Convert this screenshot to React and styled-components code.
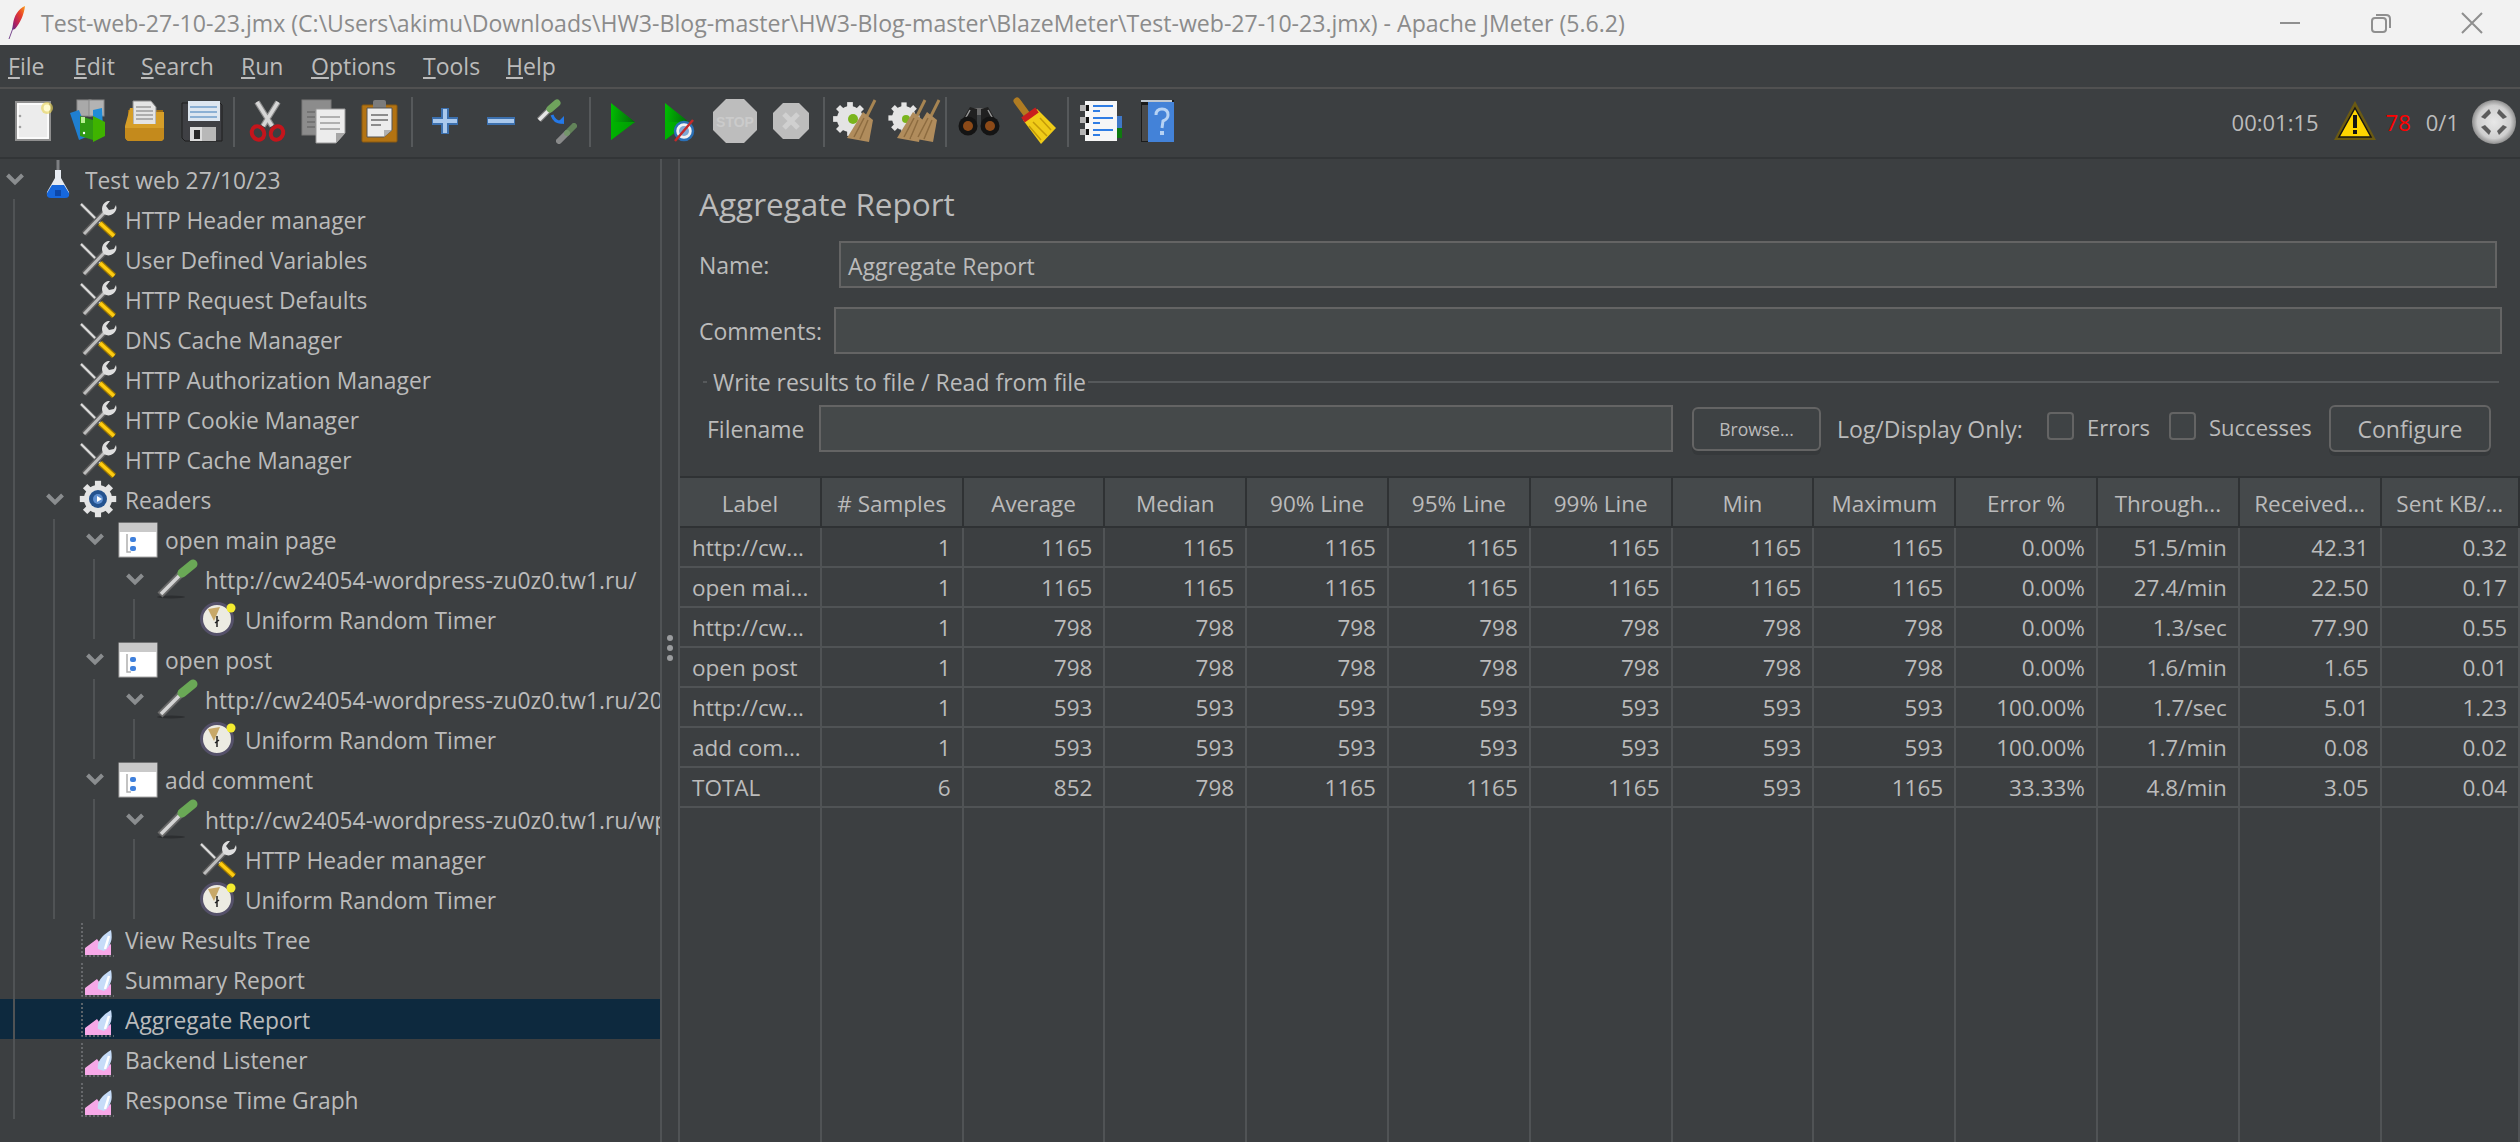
import React from "react";
import styled, { createGlobalStyle } from "styled-components";

const FONT = `"Open Sans", "Noto Sans", sans-serif`;

const GlobalStyle = createGlobalStyle`
  html, body {
    margin: 0;
    padding: 0;
    background: #3c3f41;
  }
  * {
    box-sizing: border-box;
  }
`;

const Page = styled.div`
  width: 2520px;
  height: 1142px;
  display: flex;
  flex-direction: column;
  overflow: hidden;
  background: #3c3f41;
  color: #bbbbbb;
  font-family: ${FONT};
  font-size: 23px;
`;

/* Window title */
const TitleBar = styled.div`
  height: 45px;
  flex: none;
  display: flex;
  align-items: center;
  background: #f2f2f2;
  color: #8b8b8b;
  padding: 0 3px 0 8px;
`;

const TitleText = styled.span`
  margin-left: 15px;
  flex: 1;
  white-space: nowrap;
  font-size: 23.1px;
`;

const WindowButton = styled.span`
  width: 91px;
  height: 45px;
  display: flex;
  align-items: center;
  justify-content: center;
`;

/* Menu */
const MenuBar = styled.div`
  height: 44px;
  flex: none;
  display: flex;
  align-items: center;
  padding-left: 8px;
  border-bottom: 2px solid #515151;
`;

const MenuItem = styled.span`
  width: ${(p) => p.$w}px;
  color: #bbbbbb;
  &::first-letter {
    text-decoration: underline;
  }
`;

/* Toolbar */
const ToolBar = styled.div`
  height: 70px;
  flex: none;
  display: flex;
  align-items: center;
  padding: 0 4px 2px 5px;
  border-bottom: 2px solid #323537;
`;

const ToolButton = styled.span`
  width: 56px;
  height: 44px;
  display: flex;
  align-items: center;
  justify-content: center;
`;

const ToolSep = styled.span`
  width: 2px;
  height: 50px;
  margin: 0 4px;
  background: #56595b;
`;

const StatusArea = styled.div`
  margin-left: auto;
  display: flex;
  align-items: center;
  font-size: 22px;
`;

const StatusText = styled.span`
  margin-left: ${(p) => p.$ml || 0}px;
  color: ${(p) => p.$color || "#bbbbbb"};
`;

const IconSvg = styled.svg`
  flex: none;
  overflow: visible;
  display: block;
`;

/* Split */
const Split = styled.div`
  flex: 1;
  display: flex;
  min-height: 0;
`;

const TreePane = styled.div`
  width: 662px;
  flex: none;
  overflow: hidden;
  font-size: 22.8px;
  border-right: 2px solid #505355;
`;

const Branch = styled.div`
  position: relative;
  &::before {
    content: "";
    position: absolute;
    z-index: 1;
    left: ${(p) => 13 + p.$level * 40}px;
    top: 0;
    bottom: 0;
    width: 2px;
    background: #505355;
  }
`;

const TreeRow = styled.div`
  height: 40px;
  display: flex;
  align-items: center;
  padding-left: ${(p) => p.$level * 40}px;
  white-space: nowrap;
  background: ${(p) => (p.$selected ? "#0d293e" : "transparent")};
`;

const ChevronSlot = styled.span`
  width: 30px;
  flex: none;
  display: flex;
  justify-content: center;
`;

const TreeIcon = styled.span`
  width: 40px;
  height: 40px;
  margin-left: 8px;
  flex: none;
`;

const TreeLabel = styled.span`
  margin-left: 7px;
  padding-top: 2px;
  flex: 1;
  min-width: 0;
  overflow: hidden;
`;

const Divider = styled.div`
  width: 16px;
  flex: none;
  display: flex;
  flex-direction: column;
  align-items: center;
  justify-content: center;
  gap: 4px;
  padding-bottom: 6px;
`;

const Dot = styled.span`
  width: 6px;
  height: 6px;
  border-radius: 50%;
  background: #9a9c9e;
`;

const ReportPane = styled.div`
  flex: 1;
  min-width: 0;
  display: flex;
  flex-direction: column;
  border-left: 2px solid #505355;
`;

const ReportTitle = styled.h1`
  margin: 25px 0 17px 19px;
  height: 40px;
  line-height: 40px;
  font-size: 31.5px;
  font-weight: 400;
`;

const FieldRow = styled.div`
  display: flex;
  align-items: center;
  padding: 0 ${(p) => p.$right}px 0 19px;
  margin-bottom: ${(p) => p.$bottom || 0}px;
`;

const FieldLabel = styled.span`
  width: ${(p) => p.$w}px;
  flex: none;
  white-space: nowrap;
`;

const TextBox = styled.div`
  flex: ${(p) => (p.$w ? "none" : 1)};
  width: ${(p) => (p.$w ? `${p.$w}px` : "auto")};
  height: 47px;
  padding-left: 7px;
  line-height: 46px;
  background: #45494a;
  border: 2px solid #646464;
`;

const GroupTitle = styled.div`
  display: flex;
  align-items: center;
  height: 30px;
  margin: 1px 21px 8px 23px;
  white-space: nowrap;
  &::before {
    content: "";
    width: 4px;
    height: 2px;
    margin-right: 6px;
    background: #56595b;
  }
  &::after {
    content: "";
    flex: 1;
    height: 2px;
    margin-left: 2px;
    background: #56595b;
  }
`;

const FileRow = styled.div`
  display: flex;
  align-items: center;
  height: 47px;
  padding-left: 27px;
`;

const Plain = styled.span`
  width: ${(p) => p.$w}px;
  margin-left: ${(p) => p.$ml || 0}px;
  flex: none;
  white-space: nowrap;
  font-size: ${(p) => p.$size || 23}px;
  position: relative;
  top: ${(p) => p.$up || 0}px;
`;

const Button = styled.button`
  width: ${(p) => p.$w}px;
  height: ${(p) => p.$h}px;
  margin-left: ${(p) => p.$ml}px;
  flex: none;
  padding: 0;
  font-family: ${FONT};
  font-size: ${(p) => p.$size}px;
  color: #bbbbbb;
  background: #3e4244;
  border: 2px solid #646464;
  border-radius: 6px;
  box-shadow: 0 4px 0 #36393b;
`;

const CheckBox = styled.span`
  width: 27px;
  height: 28px;
  margin-left: ${(p) => p.$ml}px;
  flex: none;
  position: relative;
  top: -3px;
  background: #3f4345;
  border: 2px solid #646464;
  border-radius: 4px;
`;

const Table = styled.div`
  flex: 1;
  margin-top: 24px;
  display: grid;
  grid-template-columns: repeat(12, 141.8px) 1fr;
  grid-template-rows: 52px repeat(7, 40px) 1fr;
  font-size: 22.5px;
`;

const HeadCell = styled.div`
  display: flex;
  align-items: center;
  justify-content: center;
  padding-top: 2px;
  background: #45494b;
  border-top: 2px solid #2f3234;
  border-bottom: 2px solid #2f3234;
  border-right: 2px solid #2f3234;
  white-space: nowrap;
  overflow: hidden;
`;

const Cell = styled.div`
  display: flex;
  align-items: center;
  justify-content: ${(p) => (p.$left ? "flex-start" : "flex-end")};
  padding: 0 11px 0 12px;
  border-right: 2px solid #505355;
  border-bottom: 2px solid #505355;
  white-space: nowrap;
  overflow: hidden;
`;

const EmptyCell = styled.div`
  border-right: 2px solid #505355;
`;

/* Drawings */
const Svg = ({ size = 44, children }) => (
  <IconSvg width={size} height={size} viewBox={`0 0 ${size} ${size}`}>
    {children}
  </IconSvg>
);

const Feather = () => (
  <IconSvg width="18" height="33" viewBox="0 0 18 33">
    <defs>
      <linearGradient id="feather" x1="1" y1="0" x2="0" y2="1">
        <stop offset="0" stopColor="#f9a01b" />
        <stop offset="0.35" stopColor="#e8402a" />
        <stop offset="0.7" stopColor="#b5205f" />
        <stop offset="1" stopColor="#5b2a86" />
      </linearGradient>
    </defs>
    <path d="M17 0 C10 3 6 10 5 18 L4 24 L7 23 C12 17 16 9 17 0 Z" fill="url(#feather)" />
    <path d="M5 22 L1 33" stroke="#7a4a90" strokeWidth="1" />
  </IconSvg>
);

const Minimize = () => (
  <IconSvg width="20" height="20" viewBox="0 0 20 20">
    <path d="M0 10 H20" stroke="#8f8f8f" strokeWidth="2" />
  </IconSvg>
);

const Restore = () => (
  <IconSvg width="20" height="20" viewBox="0 0 20 20">
    <rect x="1" y="5" width="14" height="14" rx="3" fill="none" stroke="#8f8f8f" strokeWidth="2" />
    <path d="M5 2 H15 Q19 2 19 6 V15" fill="none" stroke="#8f8f8f" strokeWidth="2" />
  </IconSvg>
);

const CloseX = () => (
  <IconSvg width="20" height="20" viewBox="0 0 20 20">
    <path d="M0 0 L20 20 M20 0 L0 20" stroke="#8f8f8f" strokeWidth="2" />
  </IconSvg>
);

const NewIcon = () => (
  <Svg>
    <rect x="5" y="2" width="34" height="38" fill="#ececec" stroke="#8f8f8f" strokeWidth="2" />
    <rect x="7" y="4" width="30" height="34" fill="none" stroke="#ffffff" strokeWidth="1.5" />
    <circle cx="9" cy="16" r="1.3" fill="#a0a0a0" />
    <circle cx="9" cy="27" r="1.3" fill="#a0a0a0" />
    <circle cx="36" cy="8" r="6" fill="#e9d65a" opacity="0.65" />
    <circle cx="36" cy="8" r="3.4" fill="#fffbd0" />
  </Svg>
);

const TemplatesIcon = () => (
  <Svg>
    <rect x="10" y="0" width="14" height="16" fill="#a9a9a9" stroke="#8a8a8a" />
    <rect x="22" y="0" width="15" height="16" fill="#b3b3b3" stroke="#8a8a8a" />
    <path d="M3 13 L12 10 L22 36 L12 40 Z" fill="#1f7fd0" />
    <path d="M26 10 L35 8 L36 30 L26 30 Z" fill="#1f8cd8" />
    <path d="M13 16 L26 20 V40 L13 36 Z" fill="#2f9a12" />
    <path d="M26 16 L38 22 V36 L26 42 Z" fill="#3fb300" />
    <rect x="14" y="17" width="4" height="6" fill="#b5ef90" />
    <circle cx="17" cy="33" r="1.2" fill="#ffffff" />
  </Svg>
);

const OpenIcon = () => (
  <Svg>
    <path d="M5 10 H40 V30 H5 Z" fill="#9b6a12" />
    <path d="M10 1 H28 L33 7 V26 H10 Z" fill="#e4e4e4" stroke="#8c8c8c" />
    <path d="M13 7 H28 M13 11 H30 M13 15 H30 M13 19 H30" stroke="#9a9a9a" strokeWidth="1.5" />
    <path d="M7 8 H10 V24 H33 V12 H41 V37 Q41 41 37 41 H7 Q2 41 2 36 V26 Z" fill="#d69e28" />
    <path d="M2 28 H41 V37 Q41 41 37 41 H7 Q2 41 2 36 Z" fill="#c48a1c" />
  </Svg>
);

const SaveIcon = () => (
  <Svg>
    <path d="M3 3 H41 L43 5 V41 H6 L3 38 Z" fill="#3f4044" stroke="#1e1e1e" />
    <rect x="9" y="1" width="32" height="20" fill="#dde6f0" />
    <path d="M11 7 H38 M11 12 H38 M11 17 H38" stroke="#8cb0d4" strokeWidth="2" />
    <rect x="11" y="27" width="26" height="14" fill="#b8b8b8" />
    <rect x="11" y="27" width="12" height="14" fill="#dcdcdc" />
    <rect x="15" y="30" width="6" height="9" fill="#2a2a2a" />
  </Svg>
);

const CutIcon = () => (
  <Svg>
    <path d="M12 2 L27 26 M33 2 L18 26" stroke="#8c8c8c" strokeWidth="6" />
    <path d="M12 2 L27 26 M33 2 L18 26" stroke="#d6d6d6" strokeWidth="3.5" />
    <ellipse cx="13" cy="33" rx="6" ry="7" fill="none" stroke="#c4151c" strokeWidth="4" transform="rotate(-30 13 33)" />
    <ellipse cx="32" cy="33" rx="6" ry="7" fill="none" stroke="#c4151c" strokeWidth="4" transform="rotate(30 32 33)" />
  </Svg>
);

const CopyIcon = () => (
  <Svg>
    <rect x="1" y="0" width="29" height="35" fill="#8c8c8c" stroke="#7a7a7a" />
    <path d="M6 12 H14 M6 17 H14 M6 22 H14 M6 27 H14" stroke="#747474" strokeWidth="2" />
    <path d="M15 9 H44 V33 L35 43 H15 Z" fill="#ececec" stroke="#9a9a9a" />
    <path d="M35 43 V33 H44 Z" fill="#a6a6a6" />
    <path d="M19 17 H39 M19 23 H39 M19 29 H39" stroke="#b0b0b0" strokeWidth="2" />
  </Svg>
);

const PasteIcon = () => (
  <Svg>
    <rect x="5" y="5" width="35" height="37" rx="1" fill="#b37312" stroke="#8a5a10" />
    <rect x="16" y="0" width="13" height="9" rx="2" fill="#7c7c7c" />
    <path d="M10 8 H35 V30 L27 37 H10 Z" fill="#ececec" stroke="#555" />
    <path d="M27 37 V30 H35 Z" fill="#b0b0b0" />
    <path d="M14 15 H31 M14 20 H31 M14 25 H24" stroke="#8c8c8c" strokeWidth="2" />
  </Svg>
);

const PlusIcon = () => (
  <Svg>
    <path d="M22 8 V34 M9 21 H35" stroke="#3c70ae" strokeWidth="8" />
    <path d="M22 9 V33 M10 21 H34" stroke="#a9c8ec" strokeWidth="4" />
  </Svg>
);

const MinusIcon = () => (
  <Svg>
    <path d="M8 21 H36" stroke="#3c70ae" strokeWidth="8" />
    <path d="M9 21 H35" stroke="#a9c8ec" strokeWidth="4" />
  </Svg>
);

const ToggleIcon = () => (
  <Svg>
    <path d="M4 20 L15 9" stroke="#777" strokeWidth="6" />
    <path d="M4 20 L15 9" stroke="#e6e6e6" strokeWidth="3.5" />
    <path d="M15 9 L22 3" stroke="#6fa35c" strokeWidth="7" strokeLinecap="round" />
    <path d="M17 15 Q20 23 27 22" fill="none" stroke="#2479e8" strokeWidth="3" />
    <path d="M22 23 L29 24 L29 16 Z" fill="#2479e8" />
    <path d="M24 41 L32 33" stroke="#a3a3a3" strokeWidth="6" strokeLinecap="round" opacity="0.75" />
    <path d="M32 33 L39 26" stroke="#6f9a62" strokeWidth="6" strokeLinecap="round" opacity="0.75" />
  </Svg>
);

const StartShape = ({ x }) => (
  <>
    <defs>
      <linearGradient id={`play${x}`} x1="0" y1="0" x2="1" y2="0.2">
        <stop offset="0" stopColor="#00c000" />
        <stop offset="1" stopColor="#046b0c" />
      </linearGradient>
    </defs>
    <path d={`M${x} 3 L${x + 24} 22 L${x} 40 Z`} fill={`url(#play${x})`} />
    <path d={`M${x} 22 L${x + 24} 22 L${x} 40 Z`} fill="#00b300" opacity="0.7" />
  </>
);

const StartIcon = () => (
  <Svg>
    <StartShape x={10} />
  </Svg>
);

const StartNoPauseIcon = () => (
  <Svg>
    <StartShape x={8} />
    <circle cx="27" cy="31" r="9" fill="#f2f2f2" stroke="#2a6fb5" strokeWidth="2.5" />
    <circle cx="27" cy="31" r="5" fill="#7fa8d4" />
    <path d="M18 41 L36 20" stroke="#c42a2a" strokeWidth="2.5" />
  </Svg>
);

const StopIcon = () => (
  <Svg>
    <path d="M13 -1 H31 L44 12 V30 L31 43 H13 L0 30 V12 Z" fill="#bdbdbd" />
    <text
      x="22"
      y="27"
      textAnchor="middle"
      fontFamily="Liberation Sans, sans-serif"
      fontWeight="700"
      fontSize="14"
      fill="#cbcbcb"
    >
      STOP
    </text>
  </Svg>
);

const ShutdownIcon = () => (
  <Svg>
    <path d="M14 3 H30 L40 13 V29 L30 39 H14 L4 29 V13 Z" fill="#bdbdbd" />
    <path d="M15 14 L29 28 M29 14 L15 28" stroke="#d0d0d0" strokeWidth="5" />
  </Svg>
);

const GearShape = ({ cx, cy, r }) => (
  <>
    {[0, 45, 90, 135, 180, 225, 270, 315].map((deg) => (
      <rect
        key={deg}
        x={cx - r * 0.22}
        y={cy - r * 1.3}
        width={r * 0.44}
        height={r * 0.5}
        fill="#e4e4e4"
        transform={`rotate(${deg} ${cx} ${cy})`}
      />
    ))}
    <circle cx={cx} cy={cy} r={r} fill="#e4e4e4" />
  </>
);

const BroomShape = ({ x }) => (
  <>
    <path d={`M${x + 36} 0 L${x + 28} 16`} stroke="#a68452" strokeWidth="3" />
    <path d={`M${x + 24} 12 L${x + 34} 20 L${x + 30} 42 L${x + 8} 38 Z`} fill="#b08c5c" />
    <path
      d={`M${x + 15} 37 L${x + 25} 18 M${x + 21} 39 L${x + 29} 20`}
      stroke="#8d6c40"
      strokeWidth="1.5"
    />
  </>
);

const ClearIcon = () => (
  <Svg>
    <GearShape cx={15} cy={19} r={13} />
    <circle cx="18" cy="19" r="5" fill="#7ab51d" />
    <BroomShape x={4} />
  </Svg>
);

const ClearAllIcon = () => (
  <Svg>
    <GearShape cx={13} cy={18} r={12} />
    <circle cx="15" cy="19" r="4" fill="#7ab51d" />
    <BroomShape x={-2} />
    <BroomShape x={12} />
  </Svg>
);

const BinocularsIcon = () => (
  <Svg>
    <rect x="14" y="8" width="16" height="7" rx="2" fill="#6a6a6a" />
    <path d="M13 7 L3 24 H20 V9 Z M31 7 L41 24 H24 V9 Z" fill="#202020" />
    <path d="M13 10 L8 19 M31 10 L36 19" stroke="#9a9a9a" strokeWidth="1.5" />
    <circle cx="11" cy="26" r="9.5" fill="#141414" />
    <circle cx="33" cy="26" r="9.5" fill="#141414" />
    <circle cx="11" cy="26" r="5" fill="#8c4a18" />
    <circle cx="33" cy="26" r="5" fill="#8c4a18" />
  </Svg>
);

const BroomIcon = () => (
  <Svg>
    <path d="M4 1 L15 16" stroke="#b07c22" strokeWidth="7" strokeLinecap="round" />
    <path d="M10 20 L24 9 L43 28 L28 44 Z" fill="#f0cc18" />
    <path d="M20 22 L34 36 M16 26 L28 40 M27 18 L38 30" stroke="#c49b08" strokeWidth="1.5" />
    <path d="M10 20 L24 10" stroke="#c81e1e" strokeWidth="6" />
  </Svg>
);

const ListIcon = () => (
  <Svg>
    <rect x="37" y="16" width="6" height="12" fill="#3f78c8" />
    <rect x="37" y="28" width="6" height="10" fill="#0f7a0f" />
    <rect x="6" y="1" width="32" height="40" fill="#f6f6f6" />
    {[8, 20, 32].map((y) => (
      <g key={y}>
        <rect x="1" y={y - 3} width="6" height="6" fill="#b5b5b5" />
        <rect x="7" y={y - 3} width="3" height="6" fill="#111" />
        <rect x="14" y={y - 3} width="20" height="2" fill="#2f7de4" />
        <rect x="14" y={y + 2} width="7" height="2" fill="#2f7de4" />
      </g>
    ))}
  </Svg>
);

const HelpIcon = () => (
  <Svg>
    <rect x="6" y="0" width="33" height="42" fill="#1a1a1a" />
    <rect x="6" y="0" width="31" height="2" fill="#bfc7cf" />
    <rect x="7" y="5" width="6" height="36" fill="#4a4a4a" />
    <rect x="13" y="2" width="26" height="40" fill="#4382d8" />
    <path d="M21 15 Q21 9 27 9 Q33 9 33 15 Q33 19 28 21 L27 28" fill="none" stroke="#b6d2f4" strokeWidth="3" />
    <rect x="25" y="31" width="4" height="4" fill="#b6d2f4" />
  </Svg>
);

const WarnIcon = () => (
  <Svg>
    <path d="M22 1 L43 40 H1 Z" fill="#6b5a12" />
    <path d="M22 8 L38 37 H6 Z" fill="#ffd500" stroke="#151515" strokeWidth="1.5" />
    <rect x="20" y="15" width="4" height="13" fill="#151515" />
    <rect x="20" y="30" width="4" height="4" fill="#151515" />
  </Svg>
);

const ExpandIcon = () => (
  <Svg>
    <defs>
      <radialGradient id="orb">
        <stop offset="0" stopColor="#e8e8e8" />
        <stop offset="0.75" stopColor="#cfcfcf" />
        <stop offset="1" stopColor="#8f8f8f" />
      </radialGradient>
    </defs>
    <circle cx="22" cy="22" r="22" fill="url(#orb)" />
    <path
      d="M9 17 L17 9 L19 13 L13 19 Z M35 17 L27 9 L25 13 L31 19 Z M9 27 L17 35 L19 31 L13 25 Z M35 27 L27 35 L25 31 L31 25 Z"
      fill="#5c5c5c"
    />
  </Svg>
);

const Chevron = () => (
  <IconSvg width="18" height="12" viewBox="0 0 18 12">
    <path d="M1.5 2 L9 9.5 L16.5 2" fill="none" stroke="#8a8d8f" strokeWidth="4" />
  </IconSvg>
);

const FlaskNode = () => (
  <Svg size={40}>
    <path d="M20 1 V14" stroke="#7d7f82" strokeWidth="3" />
    <path d="M17 11 H23 V19 L31 33 Q32 38 27 38 H13 Q8 38 9 33 L17 19 Z" fill="#e6ebf1" />
    <path d="M14 26 H26 L31 34 Q32 39 27 39 H13 Q8 39 9 34 Z" fill="#1667dc" />
    <path d="M17 31 H23 V37 H17 Z" fill="#0c47a8" />
  </Svg>
);

const ToolsNode = () => (
  <Svg size={40}>
    <path d="M3 5 L22 24" stroke="#6e6e6e" strokeWidth="3.5" />
    <path d="M3 5 L22 24" stroke="#e2e2e2" strokeWidth="1.8" />
    <path d="M6 35 L27 13" stroke="#5c5c5c" strokeWidth="6" />
    <path d="M6 35 L27 13" stroke="#bdbdbd" strokeWidth="3" />
    <path d="M26 15 A8 8 0 0 1 30 2 L32 2 L28 7 L31 11 L36 10 L38 6 A8 8 0 0 1 26 15 Z" fill="#dedede" />
    <path d="M22 24 L36 37" stroke="#9d7a00" strokeWidth="6" />
    <path d="M22 24 L36 37" stroke="#ffcc11" strokeWidth="3.5" />
  </Svg>
);

const GearNode = () => (
  <Svg size={40}>
    <GearShape cx={20} cy={20} r={14} />
    <circle cx="20" cy="20" r="9" fill="#24528f" />
    <circle cx="20" cy="20" r="5" fill="#5f8fd0" />
    <path d="M19 17 L24 20 L19 23 Z" fill="#ffffff" />
  </Svg>
);

const ThreadNode = () => (
  <Svg size={40}>
    <rect x="1" y="4" width="38" height="34" fill="#ffffff" stroke="#a8a8a8" />
    <rect x="1" y="4" width="38" height="9" fill="#c9c9c9" />
    <path d="M9 15 V33 H13" fill="none" stroke="#b0b0b0" strokeWidth="1.5" />
    <rect x="12" y="18" width="6" height="5" rx="2" fill="#3f80dc" />
    <rect x="12" y="27" width="6" height="5" rx="2" fill="#3f80dc" />
  </Svg>
);

const PipetteNode = () => (
  <Svg size={40}>
    <ellipse cx="13" cy="38" rx="14" ry="1.5" fill="#2c2e30" />
    <path d="M2 36 L23 15" stroke="#6a6a6a" strokeWidth="7" />
    <path d="M3 35 L23 15" stroke="#d4d4d4" strokeWidth="3.5" />
    <path d="M24 14 L35 5" stroke="#6aa856" strokeWidth="9" strokeLinecap="round" />
  </Svg>
);

const TimerNode = () => (
  <Svg size={40}>
    <circle cx="19" cy="20" r="15.5" fill="#ecebe2" stroke="#55516a" strokeWidth="3" />
    <path d="M10 10 L22 8 L16 22 Z" fill="#c8a868" />
    <path d="M17 24 L21 21 M19 17 V28" stroke="#222" strokeWidth="1.5" />
    <circle cx="33" cy="9" r="4.5" fill="#f4ec30" />
  </Svg>
);

const ChartNode = () => (
  <Svg size={40}>
    <path d="M4 4 V37 H36" fill="none" stroke="#74777a" strokeWidth="1.5" strokeDasharray="2 2" />
    <path d="M7 36 V29 L19 20 L26 30 L33 25 V36 Z" fill="#f7a8e8" />
    <path d="M20 30 Q18 20 33 11 Q36 25 26 32 Z" fill="#c6dcf8" />
    <path d="M31 17 L27 30" stroke="#ffffff" strokeWidth="2.5" />
  </Svg>
);

const ICONS = {
  flask: FlaskNode,
  tools: ToolsNode,
  gear: GearNode,
  thread: ThreadNode,
  pipette: PipetteNode,
  timer: TimerNode,
  chart: ChartNode,
};

const MENUS = [
  ["File", 66],
  ["Edit", 67],
  ["Search", 100],
  ["Run", 70],
  ["Options", 112],
  ["Tools", 83],
  ["Help", 70],
];

const TOOLS = [
  [NewIcon, TemplatesIcon, OpenIcon, SaveIcon],
  [CutIcon, CopyIcon, PasteIcon],
  [PlusIcon, MinusIcon, ToggleIcon],
  [StartIcon, StartNoPauseIcon, StopIcon, ShutdownIcon],
  [ClearIcon, ClearAllIcon],
  [BinocularsIcon, BroomIcon],
  [ListIcon, HelpIcon],
];

const timer = { icon: "timer", label: "Uniform Random Timer" };

const TREE = {
  icon: "flask",
  label: "Test web 27/10/23",
  children: [
    { icon: "tools", label: "HTTP Header manager" },
    { icon: "tools", label: "User Defined Variables" },
    { icon: "tools", label: "HTTP Request Defaults" },
    { icon: "tools", label: "DNS Cache Manager" },
    { icon: "tools", label: "HTTP Authorization Manager" },
    { icon: "tools", label: "HTTP Cookie Manager" },
    { icon: "tools", label: "HTTP Cache Manager" },
    {
      icon: "gear",
      label: "Readers",
      children: [
        {
          icon: "thread",
          label: "open main page",
          children: [
            {
              icon: "pipette",
              label: "http://cw24054-wordpress-zu0z0.tw1.ru/",
              children: [timer],
            },
          ],
        },
        {
          icon: "thread",
          label: "open post",
          children: [
            {
              icon: "pipette",
              label: "http://cw24054-wordpress-zu0z0.tw1.ru/20",
              children: [timer],
            },
          ],
        },
        {
          icon: "thread",
          label: "add comment",
          children: [
            {
              icon: "pipette",
              label: "http://cw24054-wordpress-zu0z0.tw1.ru/wp",
              children: [{ icon: "tools", label: "HTTP Header manager" }, timer],
            },
          ],
        },
      ],
    },
    { icon: "chart", label: "View Results Tree" },
    { icon: "chart", label: "Summary Report" },
    { icon: "chart", label: "Aggregate Report", selected: true },
    { icon: "chart", label: "Backend Listener" },
    { icon: "chart", label: "Response Time Graph" },
  ],
};

const COLUMNS = [
  "Label",
  "# Samples",
  "Average",
  "Median",
  "90% Line",
  "95% Line",
  "99% Line",
  "Min",
  "Maximum",
  "Error %",
  "Through...",
  "Received...",
  "Sent KB/...",
];

const ROWS = [
  ["http://cw...", 1, 1165, 1165, 1165, 1165, 1165, 1165, 1165, "0.00%", "51.5/min", "42.31", "0.32"],
  ["open mai...", 1, 1165, 1165, 1165, 1165, 1165, 1165, 1165, "0.00%", "27.4/min", "22.50", "0.17"],
  ["http://cw...", 1, 798, 798, 798, 798, 798, 798, 798, "0.00%", "1.3/sec", "77.90", "0.55"],
  ["open post", 1, 798, 798, 798, 798, 798, 798, 798, "0.00%", "1.6/min", "1.65", "0.01"],
  ["http://cw...", 1, 593, 593, 593, 593, 593, 593, 593, "100.00%", "1.7/sec", "5.01", "1.23"],
  ["add com...", 1, 593, 593, 593, 593, 593, 593, 593, "100.00%", "1.7/min", "0.08", "0.02"],
  ["TOTAL", 6, 852, 798, 1165, 1165, 1165, 593, 1165, "33.33%", "4.8/min", "3.05", "0.04"],
];

function TreeNode({ node, level }) {
  const Icon = ICONS[node.icon];
  return (
    <>
      <TreeRow $level={level} $selected={node.selected}>
        <ChevronSlot>{node.children && <Chevron />}</ChevronSlot>
        <TreeIcon>
          <Icon />
        </TreeIcon>
        <TreeLabel>{node.label}</TreeLabel>
      </TreeRow>
      {node.children && (
        <Branch $level={level}>
          {node.children.map((child, i) => (
            <TreeNode key={i} node={child} level={level + 1} />
          ))}
        </Branch>
      )}
    </>
  );
}

export default function App() {
  return (
    <Page>
      <GlobalStyle />
      <TitleBar>
        <Feather />
        <TitleText>
          Test-web-27-10-23.jmx (C:\Users\akimu\Downloads\HW3-Blog-master\HW3-Blog-master\BlazeMeter\Test-web-27-10-23.jmx) - Apache JMeter (5.6.2)
        </TitleText>
        <WindowButton>
          <Minimize />
        </WindowButton>
        <WindowButton>
          <Restore />
        </WindowButton>
        <WindowButton>
          <CloseX />
        </WindowButton>
      </TitleBar>

      <MenuBar>
        {MENUS.map(([name, w]) => (
          <MenuItem key={name} $w={w}>
            {name}
          </MenuItem>
        ))}
      </MenuBar>

      <ToolBar>
        {TOOLS.map((group, g) => (
          <React.Fragment key={g}>
            {g > 0 && <ToolSep />}
            {group.map((Icon, i) => (
              <ToolButton key={i}>
                <Icon />
              </ToolButton>
            ))}
          </React.Fragment>
        ))}
        <StatusArea>
          <StatusText>00:01:15</StatusText>
          <StatusText $ml={14}>
            <WarnIcon />
          </StatusText>
          <StatusText $ml={9} $color="#ff0000">
            78
          </StatusText>
          <StatusText $ml={15}>0/1</StatusText>
          <StatusText $ml={13}>
            <ExpandIcon />
          </StatusText>
        </StatusArea>
      </ToolBar>

      <Split>
        <TreePane>
          <TreeNode node={TREE} level={0} />
        </TreePane>
        <Divider>
          <Dot />
          <Dot />
          <Dot />
        </Divider>
        <ReportPane>
          <ReportTitle>Aggregate Report</ReportTitle>
          <FieldRow $right={23} $bottom={19}>
            <FieldLabel $w={140}>Name:</FieldLabel>
            <TextBox>Aggregate Report</TextBox>
          </FieldRow>
          <FieldRow $right={18} $bottom={12}>
            <FieldLabel $w={135}>Comments:</FieldLabel>
            <TextBox />
          </FieldRow>
          <GroupTitle>Write results to file / Read from file</GroupTitle>
          <FileRow>
            <FieldLabel $w={112}>Filename</FieldLabel>
            <TextBox $w={854} />
            <Button $w={129} $h={44} $ml={19} $size={17.5}>
              Browse...
            </Button>
            <Plain $w={186} $ml={16}>
              Log/Display Only:
            </Plain>
            <CheckBox $ml={24} />
            <Plain $w={59} $ml={13} $up={-2} $size={22}>
              Errors
            </Plain>
            <CheckBox $ml={23} />
            <Plain $w={104} $ml={13} $up={-2} $size={22}>
              Successes
            </Plain>
            <Button $w={162} $h={47} $ml={16} $size={23}>
              Configure
            </Button>
          </FileRow>
          <Table>
            {COLUMNS.map((c) => (
              <HeadCell key={c}>{c}</HeadCell>
            ))}
            {ROWS.map((row, r) =>
              row.map((v, c) => (
                <Cell key={`${r}-${c}`} $left={c === 0}>
                  {v}
                </Cell>
              ))
            )}
            {COLUMNS.map((c) => (
              <EmptyCell key={c} />
            ))}
          </Table>
        </ReportPane>
      </Split>
    </Page>
  );
}
